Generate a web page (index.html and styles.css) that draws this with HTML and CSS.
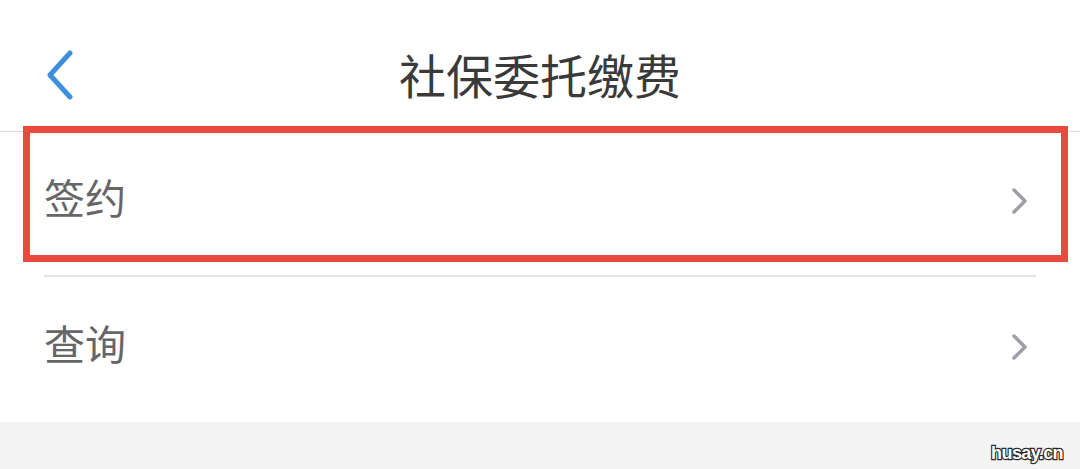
FILE: index.html
```html
<!DOCTYPE html>
<html lang="zh">
<head>
<meta charset="utf-8">
<link rel="stylesheet" href="styles.css">
</head>
<body>
<div class="page">
  <header class="topbar">
    <div class="back">
      <svg width="30" height="50" viewBox="0 0 30 50"><path d="M25 3 L5 25 L25 47" fill="none" stroke="#3f8fdf" stroke-width="5" stroke-linecap="round" stroke-linejoin="round"/></svg>
    </div>
    <h1 class="title">社保委托缴费</h1>
    <div class="spacer"></div>
  </header>
  <ul class="menu">
    <li class="item highlighted">
      <span class="label">签约</span>
      <svg class="arrow" width="18" height="28" viewBox="0 0 18 28"><path d="M3 3 L14 14 L3 25" fill="none" stroke="#9d9ea8" stroke-width="3.5" stroke-linecap="round" stroke-linejoin="round"/></svg>
      <div class="mark"></div>
    </li>
    <li class="divider"></li>
    <li class="item">
      <span class="label">查询</span>
      <svg class="arrow" width="18" height="28" viewBox="0 0 18 28"><path d="M3 3 L14 14 L3 25" fill="none" stroke="#9d9ea8" stroke-width="3.5" stroke-linecap="round" stroke-linejoin="round"/></svg>
    </li>
  </ul>
  <footer class="bottom">
    <span class="watermark">husay.cn</span>
  </footer>
</div>
</body>
</html>
```
FILE: styles.css
```css
html, body {
  margin: 0;
  padding: 0;
  background: #ffffff;
}
body {
  font-family: "Noto Sans CJK SC", "Noto Sans", sans-serif;
}
.page {
  width: 1080px;
  height: 469px;
  display: flex;
  flex-direction: column;
  overflow: hidden;
  position: relative;
}
.topbar {
  height: 131px;
  border-bottom: 1px solid #dcdcdc;
  display: grid;
  grid-template-columns: 1fr auto 1fr;
  align-items: center;
  box-sizing: content-box;
}
.back {
  padding-left: 45px;
  padding-top: 18px;
  display: flex;
  align-items: center;
}
.title {
  margin: 0;
  padding-top: 15px;
  font-size: 47px;
  font-weight: 400;
  color: #3a3a3a;
  line-height: 1;
}
.menu {
  list-style: none;
  margin: 0;
  padding: 0;
}
.item {
  height: 143px;
  box-sizing: border-box;
  display: flex;
  align-items: center;
  justify-content: space-between;
  padding: 0 51px 6px 44px;
  position: relative;
}
.item + .divider + .item {
  height: 145px;
}
.label {
  font-size: 41px;
  color: #666666;
  line-height: 1;
  margin-bottom: 8px;
}
.arrow {
  display: block;
}
.divider {
  height: 2px;
  background: #e6e6e8;
  margin: 0 44px;
}
.mark {
  position: absolute;
  left: 23px;
  right: 12px;
  top: -6px;
  bottom: 13px;
  border: 7px solid #e84a3e;
}
.bottom {
  flex: 1;
  background: #f4f4f4;
  position: relative;
}
.watermark {
  position: absolute;
  right: 17px;
  bottom: 7px;
  font-family: "Liberation Sans", sans-serif;
  font-weight: 700;
  font-size: 18px;
  line-height: 1;
  color: #ffffff;
  letter-spacing: -0.6px;
  -webkit-text-stroke: 2.4px #2a2a2a;
  paint-order: stroke fill;
}
```
